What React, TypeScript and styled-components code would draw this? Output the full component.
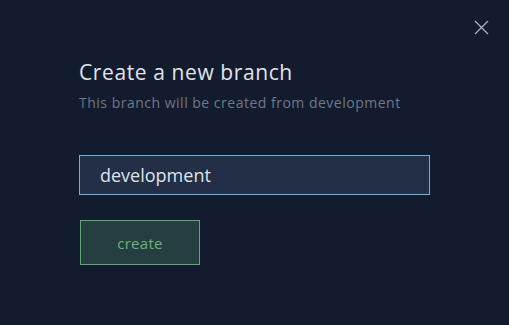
import styled, { createGlobalStyle } from "styled-components";

const GlobalStyle = createGlobalStyle`
  html, body {
    margin: 0;
    padding: 0;
    background: #131c2f;
  }
  body {
    font-family: "Open Sans", "Liberation Sans", sans-serif;
  }
`;

export default function App() {
  return (
    <>
      <GlobalStyle />
      <Modal>
        <CloseButton aria-label="close">
          <svg width="15" height="15" viewBox="0 0 15 15">
            <path d="M1 1 L14 14 M14 1 L1 14" stroke="#a9b0bd" strokeWidth="1.3" />
          </svg>
        </CloseButton>
        <Title>Create a new branch</Title>
        <Subtitle>This branch will be created from development</Subtitle>
        <BranchInput defaultValue="development" autoFocus />
        <CreateButton>create</CreateButton>
      </Modal>
    </>
  );
}

const Modal = styled.div`
  position: relative;
  width: 509px;
  height: 325px;
  box-sizing: border-box;
  padding: 58px 0 0 79px;
  display: flex;
  flex-direction: column;
  align-items: flex-start;
  background: #131c2f;
`;

const CloseButton = styled.button`
  position: absolute;
  top: 20px;
  right: 20px;
  padding: 0;
  border: none;
  background: none;
  line-height: 0;
  cursor: pointer;
`;

const Title = styled.h2`
  margin: 0;
  font-size: 21px;
  font-weight: 400;
  letter-spacing: 0.6px;
  line-height: 28px;
  color: #e1e4ea;
`;

const Subtitle = styled.p`
  margin: 7px 0 0;
  font-size: 14px;
  letter-spacing: 0.5px;
  line-height: 19px;
  color: #6f7888;
`;

const BranchInput = styled.input`
  margin-top: 43px;
  width: 351px;
  height: 40px;
  box-sizing: border-box;
  padding: 0 20px;
  border: 1px solid #5fb8e2;
  background: #232e47;
  color: #dfe3ea;
  font-family: inherit;
  font-size: 18px;
  outline: none;
  caret-color: #dfe3ea;
`;

const CreateButton = styled.button`
  margin: 25px 0 0 1px;
  width: 120px;
  height: 45px;
  border: 1px solid #62a873;
  background: #253f40;
  color: #6cb27c;
  font-family: inherit;
  font-size: 15px;
  letter-spacing: 0.3px;
  cursor: pointer;
`;
